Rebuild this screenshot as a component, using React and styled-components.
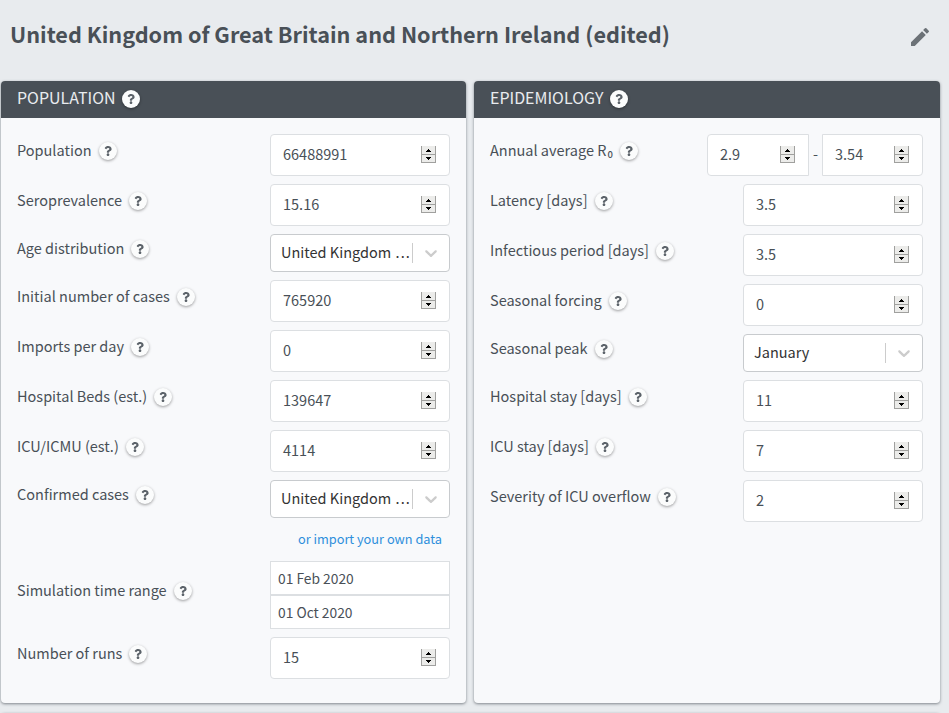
import React from "react";
import styled, { createGlobalStyle } from "styled-components";
import { MdEdit } from "react-icons/md";
import { FaQuestion } from "react-icons/fa";

const GlobalStyle = createGlobalStyle`
  * { box-sizing: border-box; }
  html, body { height: 100%; overflow: hidden; }
  body {
    margin: 0;
    background: #e8ebee;
    color: #495057;
    font-family: "Noto Sans CJK SC", "Noto Sans", sans-serif;
    font-size: 14.5px;
    line-height: 20px;
  }
`;

const Page = styled.main`
  width: 949px;
  height: 713px;
  overflow: hidden;
`;

const TitleBar = styled.header`
  height: 81px;
  padding: 0 17px 10px 10px;
  display: flex;
  align-items: center;
  justify-content: space-between;
  svg { margin-top: 3px; color: #6c7277; }
`;

const Title = styled.h1`
  margin: 0;
  padding-bottom: 4px;
  font-size: 21.67px;
  font-weight: 700;
  line-height: 30px;
  white-space: nowrap;
`;

const Columns = styled.div`
  display: grid;
  grid-template-columns: 465px 466px;
  column-gap: 8px;
  padding-left: 1px;
  height: 622px;
`;

const Card = styled.section`
  background: #f8f9fb;
  border-radius: 4px;
  box-shadow: 0 1px 3px rgba(40, 48, 56, 0.55);
  overflow: hidden;
`;

const NextCard = styled(Card)`
  height: 40px;
  margin: 10px 9px 0 1px;
`;

const CardHeader = styled.h2`
  margin: 0;
  height: 37px;
  padding: 0 16px 3px;
  display: flex;
  align-items: center;
  gap: 7px;
  background: #495057;
  color: #e9ecef;
  font-size: 15.95px;
  font-weight: 400;
`;

const CardTitle = styled.span`
  padding-bottom: 2px;
`;

const CardBody = styled.div`
  padding: 16px ${(p) => p.$right}px 0 16px;
  display: flex;
  flex-direction: column;
  gap: 8px;
`;

const Row = styled.div`
  display: flex;
  justify-content: space-between;
  align-items: center;
`;

const Label = styled.label`
  display: flex;
  align-items: center;
  gap: 7px;
  padding-bottom: 10px;
  white-space: nowrap;
  sub {
    margin-left: 1px;
    font-size: 9.5px;
    font-weight: 500;
    line-height: 0;
    vertical-align: -2px;
  }
`;

const HelpButton = styled.button`
  width: 18px;
  height: 18px;
  margin-top: 1px;
  padding: 0;
  border: 0;
  border-radius: 50%;
  background: #fbfcfc;
  color: #5b6269;
  box-shadow: 0 1px 3px rgba(0, 0, 0, 0.38);
  display: flex;
  align-items: center;
  justify-content: center;
`;

const Field = styled.div`
  width: ${(p) => p.$width || 180}px;
  height: 42px;
  padding: 0 13px 2px 12px;
  display: flex;
  align-items: center;
  justify-content: space-between;
  background: #fff;
  border: 1px solid #dcdfe2;
  border-radius: ${(p) => p.$radius || "4px"};
`;

const SelectBox = styled.div`
  width: 180px;
  height: 38px;
  padding-left: 10px;
  display: flex;
  align-items: center;
  background: #fff;
  border: 1px solid #c8cbce;
  border-radius: 4px;
  color: #333;
`;

const SelectValue = styled.span`
  flex: 1;
  padding-bottom: 2px;
  white-space: nowrap;
`;

const Ellipsis = styled.span`
  letter-spacing: 1.1px;
`;

const SelectArrow = styled.span`
  width: 37px;
  height: 20px;
  border-left: 1px solid #ccc;
  display: flex;
  align-items: center;
  justify-content: center;
`;

const Range = styled.div`
  display: flex;
  align-items: center;
`;

const Dash = styled.span`
  width: 13px;
  padding-bottom: 2px;
  text-align: center;
`;

const ImportLink = styled.a`
  height: 27px;
  padding-right: 8px;
  align-self: flex-end;
  color: #2e8fdc;
  font-size: 12.75px;
  line-height: 26px;
  white-space: nowrap;
`;

const DateRange = styled.div`
  width: 180px;
`;

const DateField = styled.div`
  height: 34px;
  padding: 0 7px;
  background: #fff;
  border: 1px solid #dcdfe2;
  line-height: 32px;
  font-size: 13.8px;
`;

function Help() {
  return (
    <HelpButton aria-label="Help">
      <FaQuestion size={10} />
    </HelpButton>
  );
}

function Spinner() {
  return (
    <svg width="15" height="18" viewBox="0 0 15 18" shapeRendering="crispEdges">
      <rect x="0" y="1" width="15" height="17" fill="#ececea" />
      <path d="M0 1h1v17H0zM14 1h1v17h-1zM0 9h15v1H0zM0 17h15v1H0z" fill="#a0a09e" />
      <path d="M7 4h1v1h1v1h1v1H5V6h1V5h1zM5 12h5v1H9v1H8v1H7v-1H6v-1H5z" fill="#000" />
    </svg>
  );
}

function NumberField({ value, width, radius }) {
  return (
    <Field $width={width} $radius={radius}>
      <span>{value}</span>
      <Spinner />
    </Field>
  );
}

function Select({ value, truncated }) {
  return (
    <SelectBox>
      <SelectValue>
        {value}
        {truncated && <Ellipsis> ...</Ellipsis>}
      </SelectValue>
      <SelectArrow>
        <svg width="20" height="20" viewBox="0 0 20 20" fill="#ccc">
          <path d="M4.516 7.548c0.436-0.446 1.043-0.481 1.576 0l3.908 3.747 3.908-3.747c0.533-0.481 1.141-0.446 1.574 0 0.436 0.445 0.408 1.197 0 1.615-0.406 0.418-4.695 4.502-4.695 4.502-0.217 0.223-0.502 0.335-0.787 0.335s-0.57-0.112-0.789-0.335c0 0-4.287-4.084-4.695-4.502s-0.436-1.17 0-1.615z" />
        </svg>
      </SelectArrow>
    </SelectBox>
  );
}

function FormRow({ label, children }) {
  return (
    <Row>
      <Label><span>{label}</span><Help /></Label>
      {children}
    </Row>
  );
}

function FormCard({ title, right, children }) {
  return (
    <Card>
      <CardHeader><CardTitle>{title}</CardTitle><Help /></CardHeader>
      <CardBody $right={right}>{children}</CardBody>
    </Card>
  );
}

export default function App() {
  return (
    <Page>
      <GlobalStyle />
      <TitleBar>
        <Title>United Kingdom of Great Britain and Northern Ireland (edited)</Title>
        <MdEdit size={24} />
      </TitleBar>
      <Columns>
        <FormCard title="POPULATION" right={16}>
          <FormRow label="Population"><NumberField value="66488991" /></FormRow>
          <FormRow label="Seroprevalence"><NumberField value="15.16" /></FormRow>
          <FormRow label="Age distribution"><Select value="United Kingdom" truncated /></FormRow>
          <FormRow label="Initial number of cases"><NumberField value="765920" /></FormRow>
          <FormRow label="Imports per day"><NumberField value="0" /></FormRow>
          <FormRow label="Hospital Beds (est.)"><NumberField value="139647" /></FormRow>
          <FormRow label="ICU/ICMU (est.)"><NumberField value="4114" /></FormRow>
          <FormRow label="Confirmed cases"><Select value="United Kingdom" truncated /></FormRow>
          <ImportLink>or import your own data</ImportLink>
          <FormRow label="Simulation time range">
            <DateRange>
              <DateField>01 Feb 2020</DateField>
              <DateField>01 Oct 2020</DateField>
            </DateRange>
          </FormRow>
          <FormRow label="Number of runs"><NumberField value="15" /></FormRow>
        </FormCard>
        <FormCard title="EPIDEMIOLOGY" right={17}>
          <FormRow label={<>Annual average R<sub>0</sub></>}>
            <Range>
              <NumberField value="2.9" width={102} radius="4px 0 0 4px" />
              <Dash>-</Dash>
              <NumberField value="3.54" width={101} radius="0 4px 4px 0" />
            </Range>
          </FormRow>
          <FormRow label="Latency [days]"><NumberField value="3.5" /></FormRow>
          <FormRow label="Infectious period [days]"><NumberField value="3.5" /></FormRow>
          <FormRow label="Seasonal forcing"><NumberField value="0" /></FormRow>
          <FormRow label="Seasonal peak"><Select value="January" /></FormRow>
          <FormRow label="Hospital stay [days]"><NumberField value="11" /></FormRow>
          <FormRow label="ICU stay [days]"><NumberField value="7" /></FormRow>
          <FormRow label="Severity of ICU overflow"><NumberField value="2" /></FormRow>
        </FormCard>
      </Columns>
      <NextCard />
    </Page>
  );
}
